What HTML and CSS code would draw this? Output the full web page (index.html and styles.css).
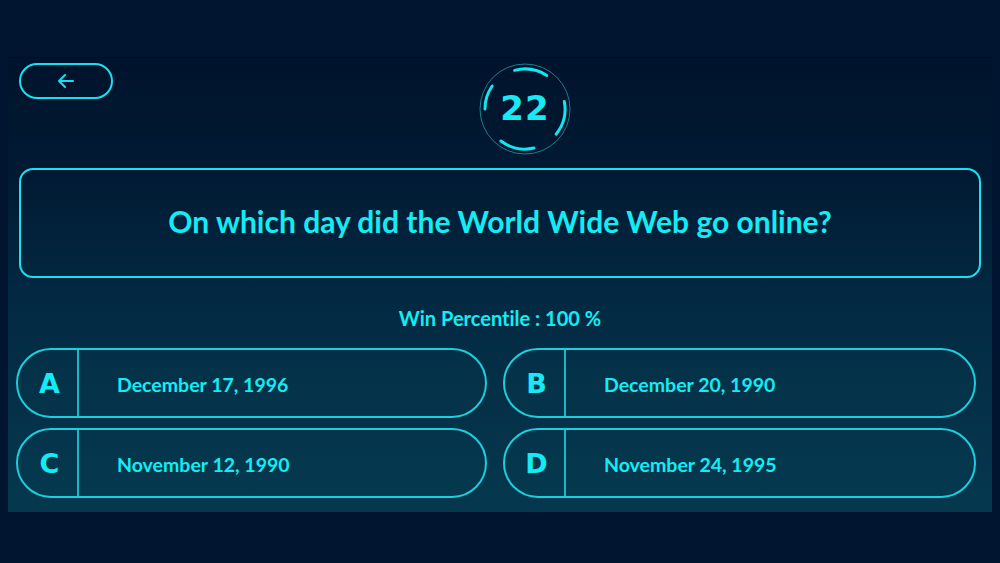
FILE: index.html
```html
<!DOCTYPE html>
<html lang="en">
<head>
<meta charset="utf-8">
<title>Quiz</title>
<link rel="stylesheet" href="styles.css">
</head>
<body>
<main class="panel">
  <header class="top">
    <button class="back" aria-label="Back">
      <svg width="18" height="16" viewBox="0 0 18 16" fill="none" stroke="currentColor" stroke-width="2" stroke-linecap="round" stroke-linejoin="round"><path d="M16 8H2M8 2L2 8l6 6"/></svg>
    </button>
    <div class="timer">
      <svg class="timer-ring" width="92" height="92" viewBox="0 0 92 92" fill="none">
        <circle cx="46" cy="46" r="45" stroke="#1b7f90" stroke-width="1"/>
        <g stroke="#12e6f0" stroke-width="3" stroke-linecap="round">
          <path d="M67.8 12.4A40 40 0 0 0 35.6 7.4"/>
          <path d="M13.2 23A40 40 0 0 0 6 46"/>
          <path d="M85.3 38.4A40 40 0 0 1 77.1 71.2"/>
          <path d="M21.9 78A40 40 0 0 0 55 85"/>
        </g>
      </svg>
      <span class="timer-num">22</span>
    </div>
    <div></div>
  </header>
  <section class="question">
    <h1>On which day did the World Wide Web go online?</h1>
  </section>
  <p class="win">Win Percentile : 100 %</p>
  <section class="answers">
    <div class="answer"><span class="letter">A</span><span class="text">December 17, 1996</span></div>
    <div class="answer"><span class="letter">B</span><span class="text">December 20, 1990</span></div>
    <div class="answer"><span class="letter">C</span><span class="text">November 12, 1990</span></div>
    <div class="answer"><span class="letter">D</span><span class="text">November 24, 1995</span></div>
  </section>
</main>
</body>
</html>
```
FILE: styles.css
```css
* { box-sizing: border-box; }
html, body { margin: 0; padding: 0; }
body {
  width: 1000px;
  height: 563px;
  background: #011530;
  font-family: Lato, "Open Sans", sans-serif;
  font-variant-ligatures: none;
  color: #14ecf4;
  overflow: hidden;
  padding-top: 57px;
}
.panel {
  margin: 0 8px;
  height: 455px;
  border-top: 1px solid #000d1f;
  background: linear-gradient(180deg, #00132c 0%, #011a33 25%, #032a43 55%, #05384e 100%);
  display: flex;
  flex-direction: column;
}
.panel > * { flex-shrink: 0; }
.top {
  display: grid;
  grid-template-columns: 1fr 92px 1fr;
  height: 110px;
  padding: 5px 0 0 50px;
}
.back {
  margin-left: -39px;
  width: 94px;
  height: 36px;
  border: 2px solid #14e2ee;
  border-radius: 18px;
  background: transparent;
  color: #14e2ee;
  display: flex;
  align-items: center;
  justify-content: center;
  padding: 0;
  cursor: pointer;
}
.timer {
  position: relative;
  width: 92px;
  height: 92px;
  display: flex;
  align-items: center;
  justify-content: center;
}
.timer-ring { position: absolute; left: 0; top: 0; }
.timer-num {
  font-family: "DejaVu Sans", sans-serif;
  font-weight: 700;
  font-size: 34px;
  letter-spacing: 1px;
  color: #16eaf4;
  padding-bottom: 2px;
}
.question {
  margin: 0 11px;
  height: 110px;
  border: 2px solid #18e2ee;
  border-radius: 14px;
  display: flex;
  align-items: center;
  justify-content: center;
  padding-bottom: 4px;
}
.question h1 {
  margin: 0;
  font-size: 30px;
  font-weight: 700;
  color: #14ecf4;
}
.win {
  margin: 0;
  height: 70px;
  display: flex;
  align-items: center;
  justify-content: center;
  font-size: 20px;
  font-weight: 700;
  color: #14ecf4;
  padding-top: 10px;
}
.answers {
  display: grid;
  grid-template-columns: 471px 473px;
  grid-auto-rows: 70px;
  column-gap: 16px;
  row-gap: 10px;
  padding-left: 8px;
}
.answer {
  height: 70px;
  border: 2px solid #1ccfdc;
  border-radius: 35px;
  display: flex;
  align-items: center;
  background: rgba(10, 70, 90, 0.12);
}
.letter {
  width: 61px;
  height: 100%;
  border-right: 2px solid #1ab8c6;
  display: flex;
  align-items: center;
  justify-content: center;
  padding-left: 4px;
  font-family: "DejaVu Sans", sans-serif;
  font-weight: 700;
  font-size: 27px;
  color: #16eaf4;
}
.text {
  padding-left: 38px;
  padding-top: 2px;
  font-size: 19.5px;
  font-weight: 700;
  color: #14ecf4;
}
```
